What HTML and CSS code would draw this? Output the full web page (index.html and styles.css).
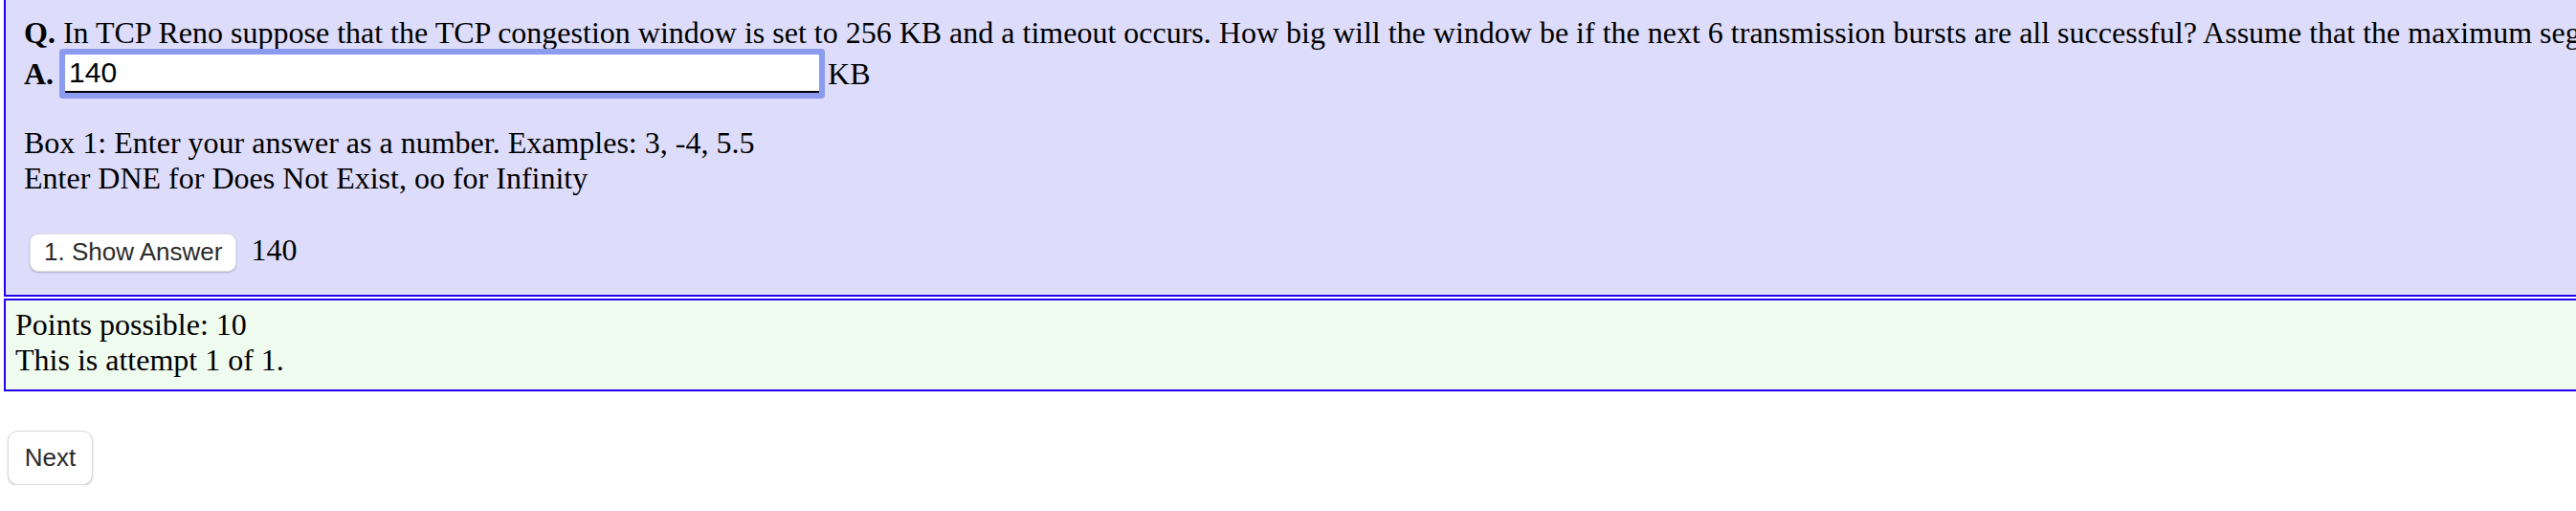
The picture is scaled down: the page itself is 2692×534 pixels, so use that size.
FILE: index.html
```html
<!DOCTYPE html>
<html lang="en">
<head>
<meta charset="utf-8">
<title>Question</title>
<link rel="stylesheet" href="styles.css">
</head>
<body>
<div class="page">
  <div class="panels">
    <div class="question">
      <p class="qline"><b>Q.</b> In TCP Reno suppose that the TCP congestion window is set to 256 KB and a timeout occurs. How big will the window be if the next 6 transmission bursts are all successful? Assume that the maximum segment size is 12 KB.</p>
      <div class="arow">
        <b class="alabel">A.</b>
        <input class="ans" type="text" value="140">
        <span class="unit">KB</span>
      </div>
      <p class="hint">Box 1: Enter your answer as a number. Examples: 3, -4, 5.5<br>Enter DNE for Does Not Exist, oo for Infinity</p>
      <div class="showrow">
        <button class="btn btn-show" type="button">1. Show Answer</button>
        <span class="shown">140</span>
      </div>
    </div>
    <div class="review">Points possible: 10<br>This is attempt 1 of 1.</div>
  </div>
  <button class="btn btn-next" type="button">Next</button>
</div>
</body>
</html>
```
FILE: styles.css
```css
html, body {
  margin: 0;
  padding: 0;
  overflow: hidden;
  background: #ffffff;
}

body {
  font-family: "Liberation Serif", "Times New Roman", serif;
  font-size: 32px;
  color: #000;
}

.page {
  padding-left: 4px;
}

.panels {
  width: max-content;
}

.question {
  background: #ddddfb;
  border: 2px solid #2200ee;
  border-top: 0;
  padding: 16px 0 24px 19px;
}

.qline {
  margin: 0;
  padding-right: 40px;
  white-space: nowrap;
}

.arow {
  display: flex;
  align-items: center;
  gap: 8px;
  margin-top: 4px;
}

.ans {
  box-sizing: border-box;
  width: 788px;
  height: 40px;
  margin: 0 1px 0 4px;
  padding: 0 4px;
  border: 0;
  border-bottom: 2px solid #000;
  border-radius: 1px;
  background: #fff;
  font-family: "Liberation Sans", Arial, sans-serif;
  font-size: 30px;
  color: #000;
  outline: none;
  box-shadow: 0 0 0 6px #8b9cf0;
}

.hint {
  margin: 34px 0 0;
}

.showrow {
  display: flex;
  align-items: baseline;
  gap: 15px;
  margin-top: 38px;
}

.btn {
  font-family: "Liberation Sans", Arial, sans-serif;
  font-size: 26px;
  color: #2b2b2b;
  background: #ffffff;
  border: 1px solid #dcdcdc;
  box-shadow: 0 1px 2px rgba(0, 0, 0, 0.22);
  cursor: pointer;
}

.btn-show {
  box-sizing: border-box;
  height: 40px;
  margin-left: 6px;
  padding: 0 14px;
  border-radius: 9px;
}

.review {
  margin-top: 2px;
  background: #f0fbf0;
  border: 2px solid #2200ee;
  padding: 7px 0 12px 10px;
}

.btn-next {
  box-sizing: border-box;
  display: block;
  width: 89px;
  height: 57px;
  margin: 41px 0 0 4px;
  padding: 0;
  border-radius: 11px;
}
```
